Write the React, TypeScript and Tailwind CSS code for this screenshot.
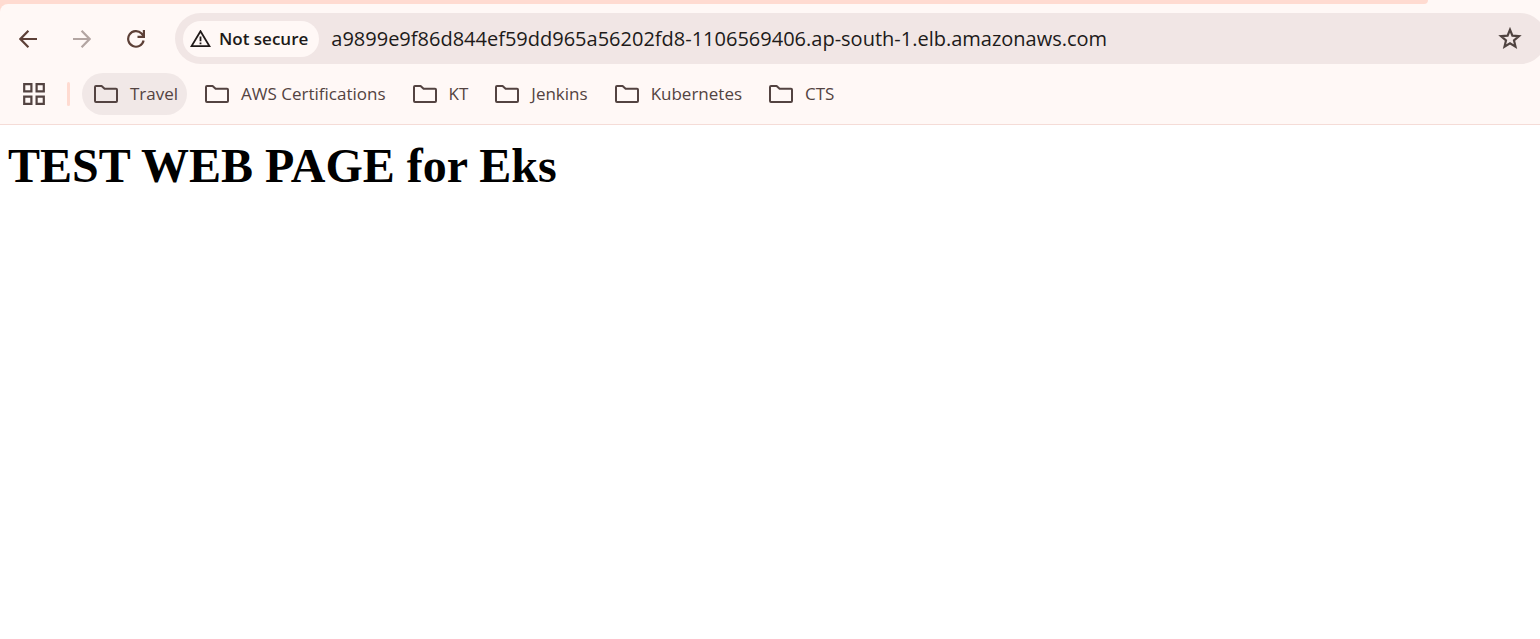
import React from "react";

const bookmarks = ["Travel", "AWS Certifications", "KT", "Jenkins", "Kubernetes", "CTS"];

function ArrowIcon({ className = "" }: { className?: string }) {
  return (
    <svg className={className} width="18" height="18" viewBox="0 0 18 18" fill="none" stroke="currentColor" strokeWidth="2.2" aria-hidden="true">
      <path d="M18 9H2M9.4 0.8L1.4 9l8 8.2" />
    </svg>
  );
}

function ReloadIcon() {
  return (
    <svg width="18" height="18" viewBox="0 0 18 18" fill="none" stroke="currentColor" strokeWidth="2.2" aria-hidden="true">
      <path d="M16.6 10.6A7.8 7.8 0 1 1 14.6 3.5L16.6 6" />
      <path d="M16.9 0v6.9H10.5" />
    </svg>
  );
}

function WarningIcon() {
  return (
    <svg width="21" height="18" viewBox="0 0 21 18" fill="none" stroke="currentColor" strokeWidth="1.8" aria-hidden="true">
      <path d="M10.5 1.2L1.6 16.1h17.8z" />
      <path d="M10.5 6.4v4.8M10.5 12.4v1.8" />
    </svg>
  );
}

function StarIcon() {
  return (
    <svg width="24" height="24" viewBox="0 0 24 24" fill="none" stroke="currentColor" strokeWidth="2.2" aria-hidden="true">
      <path d="M12 2.7l2.4 5.9 6.6.6-5 4.2 1.5 6.2-5.5-3.3-5.5 3.3 1.5-6.2-5-4.2 6.6-.6z" />
    </svg>
  );
}

function AppsIcon() {
  return (
    <svg width="22" height="22" viewBox="0 0 22 22" fill="none" stroke="currentColor" strokeWidth="2.2" aria-hidden="true">
      <path d="M1.2 1.2h7.2v7.2H1.2zM13.6 1.2h7.2v7.2h-7.2zM1.2 13.6h7.2v7.2H1.2zM13.6 13.6h7.2v7.2h-7.2z" />
    </svg>
  );
}

function FolderIcon() {
  return (
    <svg className="shrink-0" width="24" height="18" viewBox="0 0 24 18" fill="none" stroke="currentColor" strokeWidth="2" strokeLinejoin="round" aria-hidden="true">
      <path d="M2 1h5.6l3 2.8H22a1 1 0 0 1 1 1V16a1 1 0 0 1-1 1H2a1 1 0 0 1-1-1V2a1 1 0 0 1 1-1z" />
    </svg>
  );
}

export default function App() {
  return (
    <div className="min-h-screen overflow-hidden bg-white font-['Open_Sans','Noto_Sans',sans-serif]">
      <header className="border-b border-[#f5dcd7] bg-[linear-gradient(to_right,#ffdbd1_50%,#fff8f6_50%)]">
        <div className="bg-[#fff8f6]">
          <div className="mr-28 h-1 rounded-br-lg bg-[#ffdbd1]" />
        </div>
        <div className="rounded-tl-lg bg-[#fff8f6]">
          <div className="flex items-center pt-[9px]">
            <nav aria-label="History" className="flex items-center gap-9 pr-[30px] pl-[19px] text-[#5d4037]">
              <button type="button" aria-label="Back"><ArrowIcon /></button>
              <button type="button" aria-label="Forward" disabled className="text-[#b3a5a2]"><ArrowIcon className="rotate-180" /></button>
              <button type="button" aria-label="Reload"><ReloadIcon /></button>
            </nav>
            <div className="-mr-1.5 flex h-[51px] flex-1 items-center rounded-full bg-[#f1e6e5] pr-6 pl-2">
              <button type="button" className="flex h-9 shrink-0 items-center gap-2 rounded-full bg-[#fff8f6] pr-[11px] pl-[7px] text-[17px] font-semibold text-[#201a19]">
                <WarningIcon />
                <span>Not secure</span>
              </button>
              <input
                aria-label="Address"
                className="ml-3 min-w-0 flex-1 bg-transparent text-[20px] text-[#201a19] outline-none"
                defaultValue="a9899e9f86d844ef59dd965a56202fd8-1106569406.ap-south-1.elb.amazonaws.com"
              />
              <button type="button" aria-label="Bookmark this page" className="text-[#4f4340]"><StarIcon /></button>
            </div>
          </div>
          <nav aria-label="Bookmarks" className="flex items-center pt-[9px] pb-[9px] pl-[23px] text-[#534341]">
            <button type="button" aria-label="Apps"><AppsIcon /></button>
            <div className="mr-3 ml-[22px] h-6 w-[3px] rounded-full bg-[#ffdbd1]" />
            <div className="flex items-center gap-1.5">
              {bookmarks.map((name, i) => (
                <button
                  key={name}
                  type="button"
                  className={`flex h-[42px] items-center gap-3 rounded-full pr-[9px] pl-3 text-[17px] ${i === 0 ? "bg-[#f1e8e7]" : ""}`}
                >
                  <FolderIcon />
                  <span>{name}</span>
                </button>
              ))}
            </div>
          </nav>
        </div>
      </header>
      <main className="px-2 pt-3.5">
        <h1 className="font-['Liberation_Serif',serif] text-[48px] leading-[54px] font-bold text-black">TEST WEB PAGE for Eks</h1>
      </main>
    </div>
  );
}
